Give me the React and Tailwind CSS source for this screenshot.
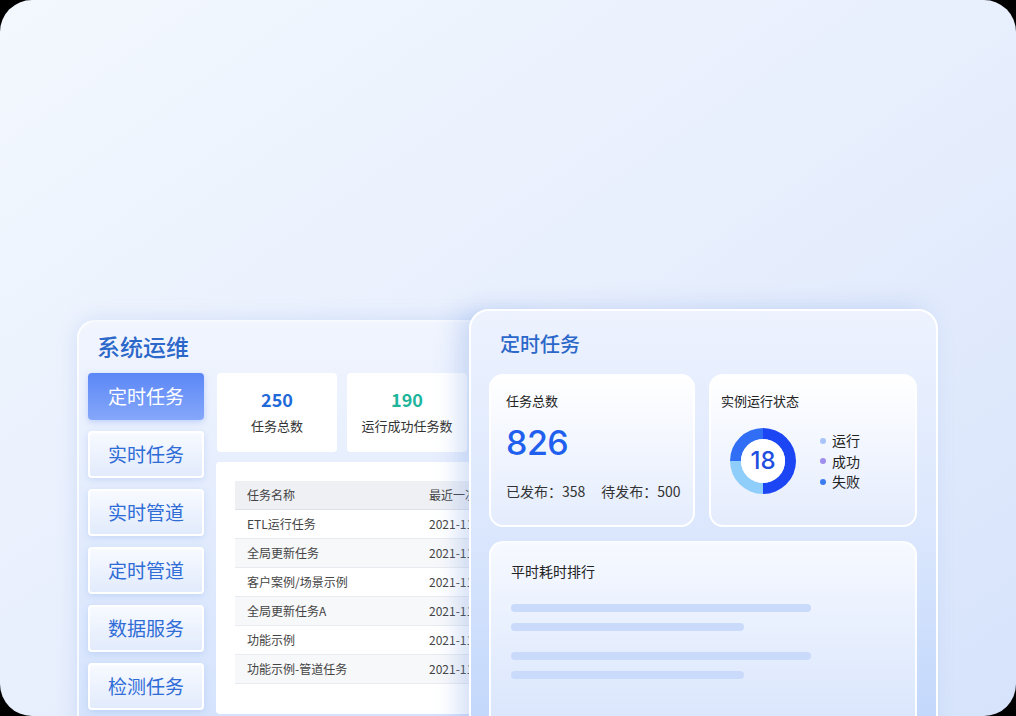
import React from 'react';

const NAV = ['定时任务', '实时任务', '实时管道', '定时管道', '数据服务', '检测任务'];

const ROWS = [
  'ETL运行任务',
  '全局更新任务',
  '客户案例/场景示例',
  '全局更新任务A',
  '功能示例',
  '功能示例-管道任务',
];

const LEGEND = [
  { label: '运行', color: 'bg-[#a8c4f8]' },
  { label: '成功', color: 'bg-[#9f8ef0]' },
  { label: '失败', color: 'bg-[#3b7cf1]' },
];

const Donut = () => (
  <svg width="70" height="70" viewBox="0 0 70 70">
    {/* right half */}
    <path d="M35 2 A33 33 0 0 1 35 68 L35 57 A22 22 0 0 0 35 13 Z" fill="#1c45f4" />
    {/* bottom-left */}
    <path d="M35 68 A33 33 0 0 1 2 35 L13 35 A22 22 0 0 0 35 57 Z" fill="#8fcdfb" />
    {/* top-left */}
    <path d="M2 35 A33 33 0 0 1 35 2 L35 13 A22 22 0 0 0 13 35 Z" fill="#2f6ef5" />
    <circle cx="35" cy="35" r="22" fill="#ffffff" />
  </svg>
);

const App = () => {
  return (
    <div className="w-[1016px] h-[716px] bg-black overflow-hidden font-['Noto_Sans_CJK_SC',sans-serif]">
      <div className="relative w-full h-full rounded-[32px] overflow-hidden bg-gradient-to-br from-[#f3f8fe] via-[#e8effd] to-[#d6e3fb]">
        {/* left panel */}
        <div className="ml-[77px] mt-[320px] w-[470px] h-[420px] rounded-tl-[18px] rounded-tr-[18px] border-2 border-white/80 bg-gradient-to-b from-[#f1f5fe] to-[#d3e2fc] shadow-[0_0_20px_rgba(120,160,230,0.25)]">
          <div className="pl-[18px] pt-[8px] h-[51px] text-[23px] font-medium text-[#2b68c9] leading-[32px]">系统运维</div>
          <div className="flex pl-[9px] gap-[13px]">
            <div className="flex flex-col gap-[11px] w-[116px]">
              {NAV.map((n, i) => (
                <div
                  key={n}
                  className={
                    i === 0
                      ? 'h-[47px] rounded-[4px] flex items-center justify-center text-[19px] text-white bg-gradient-to-b from-[#5b86f6] to-[#86a8fa] shadow-[0_2px_6px_rgba(90,130,240,0.3)]'
                      : 'h-[47px] rounded-[4px] flex items-center justify-center text-[19px] text-[#2f6cd6] border-2 border-white bg-gradient-to-b from-[#f7faff] to-[#e2ebfc] shadow-[0_2px_6px_rgba(120,160,230,0.25)]'
                  }
                >
                  {n}
                </div>
              ))}
            </div>
            <div className="flex flex-col w-[320px]">
              <div className="flex gap-[10px]">
                <div className="w-[120px] h-[79px] rounded-[4px] bg-white flex flex-col items-center pt-[12px]">
                  <div className="text-[18px] font-bold text-[#1f6ad8] leading-[28px]">250</div>
                  <div className="text-[13px] text-[#333] leading-[22px] mt-[2px]">任务总数</div>
                </div>
                <div className="w-[120px] h-[79px] rounded-[4px] bg-white flex flex-col items-center pt-[12px]">
                  <div className="text-[18px] font-bold text-[#1fb59c] leading-[28px]">190</div>
                  <div className="text-[13px] text-[#333] leading-[22px] mt-[2px]">运行成功任务数</div>
                </div>
              </div>
              <div className="mt-[10px] -ml-[1px] h-[252px] rounded-[4px] bg-white pt-[19px] pl-[19px]">
                <div className="text-[12px] text-[#444]">
                  <div className="flex h-[29px] items-center bg-[#eef0f4] border-b border-[#dde1e8]">
                    <div className="w-[194px] pl-[12px]">任务名称</div>
                    <div>最近一次</div>
                  </div>
                  {ROWS.map((r, i) => (
                    <div
                      key={r}
                      className={`flex h-[29px] items-center border-b border-[#e8ebf0] ${i % 2 === 1 ? 'bg-[#f7f8fa]' : 'bg-white'}`}
                    >
                      <div className="w-[194px] pl-[12px]">{r}</div>
                      <div>2021-11-12</div>
                    </div>
                  ))}
                </div>
              </div>
            </div>
          </div>
        </div>

        {/* right panel, floating over the left one */}
        <div className="absolute left-[469px] top-[309px] w-[469px] h-[440px] rounded-[20px] border-2 border-white bg-gradient-to-b from-[#edf2fe] via-[#dbe7fd] to-[#bfd5fb] shadow-[-10px_0_24px_rgba(110,150,225,0.3)]">
          <div className="pl-[29px] pt-[18px] h-[63px] text-[20px] font-medium text-[#2b68c9] leading-[30px]">定时任务</div>
          <div className="flex gap-[14px] pl-[18px]">
            <div className="w-[206px] h-[153px] rounded-[14px] border-2 border-white bg-gradient-to-b from-[#ffffff] to-[#e4ecfd] pl-[15px] pt-[14px]">
              <div className="text-[13px] text-[#222] leading-[22px]">任务总数</div>
              <div className="text-[34px] font-medium tracking-[-0.5px] font-['Inter',sans-serif] text-[#2160ee] leading-[40px] mt-[11px]">826</div>
              <div className="text-[14px] text-[#333] mt-[17px] leading-[22px]">
                已发布：358<span className="ml-[16px]">待发布：500</span>
              </div>
            </div>
            <div className="w-[208px] h-[153px] rounded-[14px] border-2 border-white bg-gradient-to-b from-[#ffffff] to-[#e4ecfd] pl-[10px] pt-[14px]">
              <div className="text-[13px] text-[#222] leading-[22px]">实例运行状态</div>
              <div className="flex items-center mt-[14px] ml-[7px]">
                <div className="relative w-[70px] h-[70px]">
                  <Donut />
                  <div className="absolute inset-0 flex items-center justify-center text-[24px] font-medium font-['Inter',sans-serif] text-[#1f4fe0]">18</div>
                </div>
                <div className="ml-[22px] flex flex-col">
                  {LEGEND.map((l) => (
                    <div key={l.label} className="flex items-center h-[20.5px] text-[14px] text-[#222]">
                      <span className={`w-[6px] h-[6px] rounded-full ${l.color} mr-[6px]`} />
                      {l.label}
                    </div>
                  ))}
                </div>
              </div>
            </div>
          </div>
          <div className="mt-[14px] ml-[18px] w-[428px] h-[200px] rounded-[14px] border-2 border-white/90 bg-gradient-to-b from-[#f6f9ff] to-[#d7e4fc] pl-[20px] pt-[17px]">
            <div className="text-[14px] text-[#222] leading-[22px]">平时耗时排行</div>
            <div className="mt-[22px] flex flex-col">
              <div className="w-[300px] h-[8px] rounded-full bg-[#c9dafb]" />
              <div className="mt-[11px] w-[233px] h-[8px] rounded-full bg-[#c9dafb]" />
              <div className="mt-[21px] w-[300px] h-[8px] rounded-full bg-[#c9dafb]" />
              <div className="mt-[11px] w-[233px] h-[8px] rounded-full bg-[#c9dafb]" />
            </div>
          </div>
        </div>
      </div>
    </div>
  );
};

export default App;
